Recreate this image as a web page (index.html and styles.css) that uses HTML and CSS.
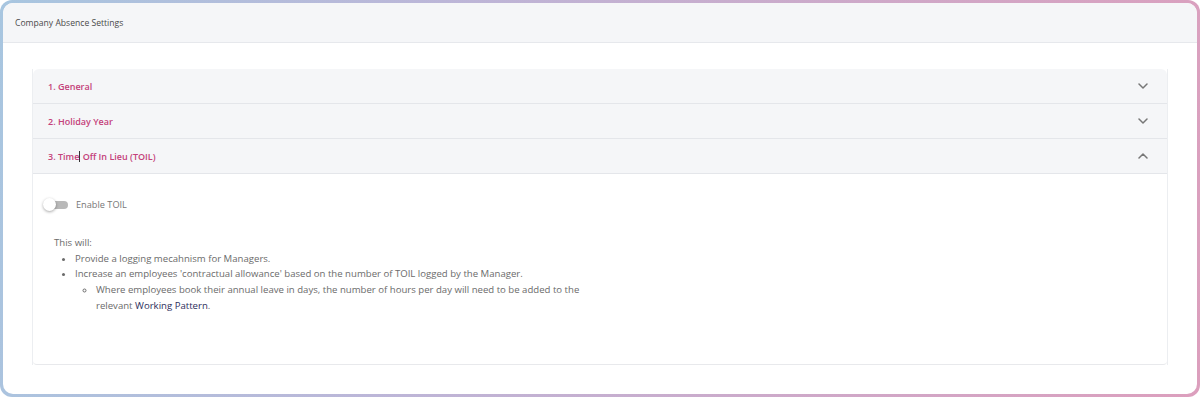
FILE: index.html
```html
<!DOCTYPE html>
<html lang="en">
<head>
  <meta charset="UTF-8" />
  <title>Company Absence Settings</title>
  <link rel="stylesheet" href="styles.css">
</head>
<body>
  <div class="frame">
    <div class="card">
      <div class="card-header">Company Absence Settings</div>

      <div class="card-body">
        <div class="accordion">
          <div class="acc-item">
            <div class="acc-head">
              <span class="acc-title">1. General</span>
              <svg class="chev" width="10" height="6" viewBox="0 0 10 6"><path d="M1 1l4 4 4-4" fill="none" stroke="#777" stroke-width="1.5" stroke-linecap="round" stroke-linejoin="round"/></svg>
            </div>
          </div>
          <div class="acc-item">
            <div class="acc-head">
              <span class="acc-title">2. Holiday Year</span>
              <svg class="chev" width="10" height="6" viewBox="0 0 10 6"><path d="M1 1l4 4 4-4" fill="none" stroke="#777" stroke-width="1.5" stroke-linecap="round" stroke-linejoin="round"/></svg>
            </div>
          </div>
          <div class="acc-item open">
            <div class="acc-head">
              <span class="acc-title">3. Time<span class="caret"></span> Off In Lieu (TOIL)</span>
              <svg class="chev" width="10" height="6" viewBox="0 0 10 6"><path d="M1 5l4-4 4 4" fill="none" stroke="#777" stroke-width="1.5" stroke-linecap="round" stroke-linejoin="round"/></svg>
            </div>
            <div class="acc-body">
              <label class="switch-row">
                <span class="switch"><span class="knob"></span></span>
                <span class="switch-label">Enable TOIL</span>
              </label>

              <div class="info">
                <p>This will:</p>
                <ul>
                  <li>Provide a logging mecahnism for Managers.</li>
                  <li>Increase an employees 'contractual allowance' based on the number of TOIL logged by the Manager.
                    <ul>
                      <li>Where employees book their annual leave in days, the number of hours per day will need to be added to the relevant <a href="#">Working Pattern</a>.</li>
                    </ul>
                  </li>
                </ul>
              </div>
            </div>
          </div>
        </div>
      </div>
    </div>
  </div>
</body>
</html>
```

FILE: styles.css
```css
html, body {
  height: 100%;
}
body {
  margin: 0;
  background: #fff;
  font-family: 'Open Sans', 'Noto Sans', sans-serif;
  color: #555;
}
.frame {
  box-sizing: border-box;
  height: 397px;
  padding: 3px;
  border-radius: 12px;
  background: linear-gradient(100deg, #a8c6e0 0%, #bcb6d8 35%, #cfa8c8 70%, #dc9fbd 100%);
}
.card {
  height: 100%;
  background: #fff;
  border-radius: 10px;
  overflow: hidden;
  display: flex;
  flex-direction: column;
}
.card-header {
  height: 39px;
  display: flex;
  align-items: center;
  padding-left: 12px;
  background: #f5f6f8;
  border-bottom: 1px solid #e6e8ec;
  font-size: 8.6px;
  color: #4a4a4a;
}
.card-body {
  padding: 26px 29px 0 29px;
}
.accordion {
  border-radius: 6px;
}
.acc-item {
  border-left: 1px solid #eceef1;
  border-right: 1px solid #eceef1;
}
.acc-head {
  height: 34px;
  display: flex;
  align-items: center;
  justify-content: space-between;
  padding: 0 19px 0 15px;
  background: #f5f6f8;
  border-bottom: 1px solid #e4e6ea;
}
.acc-item:first-child .acc-head {
  border-radius: 6px 6px 0 0;
}
.acc-title {
  font-size: 9px;
  font-weight: 600;
  color: #c4417a;
  padding-top: 1px;
}
.caret {
  display: inline-block;
  width: 1px;
  height: 11px;
  background: #333;
  vertical-align: -2px;
}
.chev {
  display: block;
}
.acc-body {
  height: 191px;
  box-sizing: border-box;
  padding: 24px 10px 0 10px;
  border-bottom: 1px solid #e8e9ec;
  border-radius: 0 0 4px 4px;
}
.switch-row {
  display: flex;
  align-items: center;
  gap: 8px;
}
.switch {
  position: relative;
  width: 25px;
  height: 12px;
  display: inline-block;
}
.switch::before {
  content: "";
  position: absolute;
  left: 4px;
  right: 0;
  top: 2px;
  height: 8px;
  border-radius: 4px;
  background: #b9b9b9;
}
.knob {
  position: absolute;
  left: 0;
  top: -1px;
  width: 13px;
  height: 13px;
  border-radius: 50%;
  background: #fff;
  box-shadow: 0 1px 3px rgba(0, 0, 0, 0.35);
}
.switch-label {
  font-size: 9.2px;
  color: #777;
}
.info {
  margin-top: 24px;
  padding-left: 11px;
  font-size: 9.6px;
  line-height: 15.7px;
  color: #6b6b6b;
}
.info p {
  margin: 0;
}
.info ul {
  margin: 0;
  padding-left: 21px;
  list-style: disc;
}
.info ul ul {
  list-style: circle;
  padding-left: 21px;
  max-width: 505px;
}
.info a {
  color: #2b2d5c;
  text-decoration: none;
}
```
